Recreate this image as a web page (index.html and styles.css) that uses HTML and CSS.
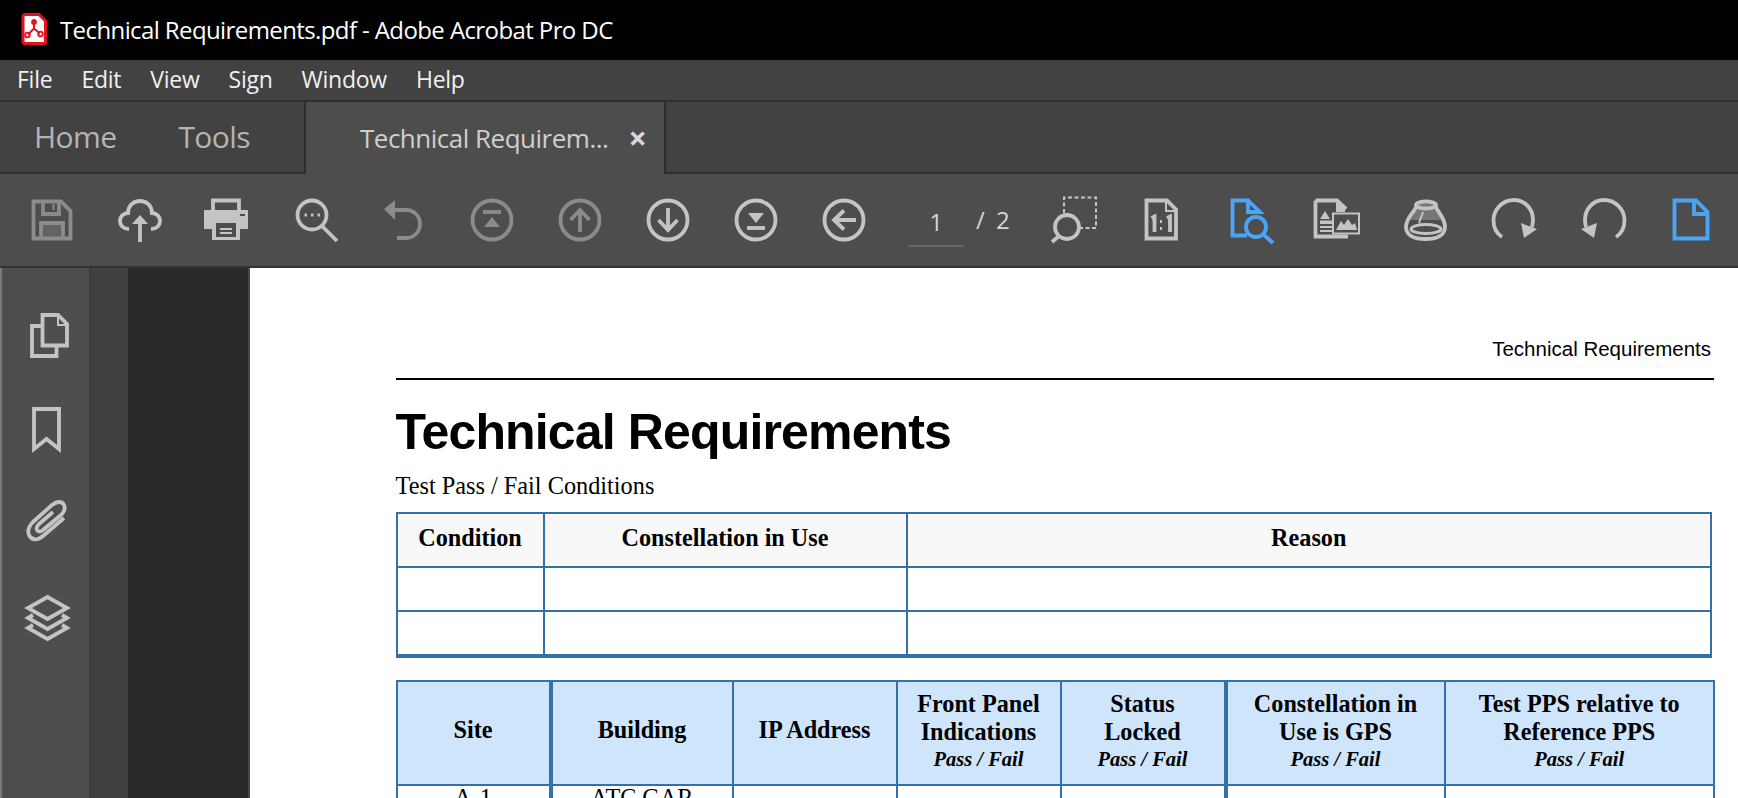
FILE: index.html
```html
<!DOCTYPE html>
<html lang="en">
<head>
<meta charset="utf-8">
<title>Technical Requirements.pdf - Adobe Acrobat Pro DC</title>
<link rel="stylesheet" href="styles.css">
</head>
<body>
<div class="app">
  <header class="titlebar">
    <svg class="app-icon" viewBox="0 0 26 32"><path d="M2 3.500a2 2 0 0 1 2-2h14l6.500 6.500v20.500a2 2 0 0 1-2 2H4a2 2 0 0 1-2-2z" fill="#fff" stroke="#e4101c" stroke-width="3"/><path d="M13 7.500v8M13 15.500l-6 6M13 15.500l6 5" fill="none" stroke="#e4101c" stroke-width="2"/><circle cx="13" cy="9" r="2" fill="none" stroke="#e4101c" stroke-width="1.800"/><circle cx="6.500" cy="22" r="2.300" fill="none" stroke="#e4101c" stroke-width="1.800"/><circle cx="19.500" cy="21" r="2.300" fill="none" stroke="#e4101c" stroke-width="1.800"/></svg>
    <span class="app-title">Technical Requirements.pdf - Adobe Acrobat Pro DC</span>
  </header>
  <nav class="menubar">
    <span>File</span><span>Edit</span><span>View</span><span>Sign</span><span>Window</span><span>Help</span>
  </nav>
  <div class="tabbar">
    <div class="tabs-left"><span class="tab-link">Home</span><span class="tab-link">Tools</span></div>
    <div class="tab-active"><span class="tab-name">Technical Requirem...</span><span class="tab-close">×</span></div>
    <div class="tabs-rest"></div>
  </div>
  <div class="toolbar">
    <div class="tool dim"><svg viewBox="0 0 48 48"><path class="s" d="M5.500 5.500H33L42.500 15V42.500H5.500Z"/><path class="s" d="M15 6V18H31V6M13 42V27H35V42"/><path class="s2" d="M25.500 8V14"/><rect class="fm" x="14" y="28" width="20" height="13"/></svg></div>
    <div class="tool"><svg viewBox="0 0 48 48"><path class="s" d="M13 33C7 33 4 29 4 25C4 20 8 17 12 17C12 10 17 5 24 5C31 5 36 10 36 17C40 17 44 20 44 25C44 29 41 33 35 33"/><path class="s" d="M24 46V22"/><path class="f" d="M24 19L32 28H16Z"/></svg></div>
    <div class="tool nudge"><svg viewBox="0 0 48 48"><path class="s" d="M11 16V4.500H37V16"/><path class="f" d="M3 14H45a1 1 0 0 1 1 1V33H37V24H11V33H2V15a1 1 0 0 1 1-1Z"/><path class="f" d="M10 23H38V44H10Z"/><rect x="14" y="27" width="20" height="14" fill="#4d4d4d"/><path d="M18 33H30M18 37H30" stroke="#c4c4c4" stroke-width="2"/><rect x="38" y="18" width="5" height="2" fill="#4d4d4d"/></svg></div>
    <div class="tool"><svg viewBox="0 0 48 48"><circle class="s" cx="20" cy="19" r="14.500"/><path class="s" d="M30 30L45 45"/><path class="dots" d="M12.500 19h2.500M19 19h2.500M25.500 19h2.500"/></svg></div>
    <div class="tool dim"><svg viewBox="0 0 48 48"><path class="s" d="M12 14H26C34 14 40 20 40 28C40 36 34 42 26 42H17"/><path class="f" d="M15 4V24L4 13Z"/></svg></div>
    <div class="tool dim"><svg viewBox="0 0 48 48"><circle class="s" cx="24" cy="24" r="19.500"/><path class="s" d="M15 16H33"/><path class="f" d="M24 21L32 31H16Z"/></svg></div>
    <div class="tool dim"><svg viewBox="0 0 48 48"><circle class="s" cx="24" cy="24" r="19.500"/><path class="s" d="M24 36V15M14.500 24L24 14L33.500 24"/></svg></div>
    <div class="tool"><svg viewBox="0 0 48 48"><circle class="s" cx="24" cy="24" r="19.500"/><path class="s" d="M24 12V33M14.500 24L24 34L33.500 24"/></svg></div>
    <div class="tool"><svg viewBox="0 0 48 48"><circle class="s" cx="24" cy="24" r="19.500"/><path class="f" d="M24 27L16 17H32Z"/><path class="s" d="M15 32H33"/></svg></div>
    <div class="tool"><svg viewBox="0 0 48 48"><circle class="s" cx="24" cy="24" r="19.500"/><path class="s" d="M36 24H15M24 14.500L14 24L24 33.500"/></svg></div>
    <div class="pager"><span class="page-input">1</span><span class="page-total">/ 2</span></div>
    <div class="tool"><svg viewBox="0 0 48 48"><path class="dash" d="M13 17V1.500H45V32H28"/><circle class="s" cx="16" cy="31" r="12"/><path class="s" d="M8 40L1 46"/></svg></div>
    <div class="tool nudge"><svg viewBox="0 0 48 48"><path class="s" d="M9.500 4.500H30L39 13.500V42.500H9.500Z"/><path class="s2" d="M29 5V15H39"/><path class="num" d="M14.500 22L17.500 20.500V36M30 22L33 20.500V36"/><path class="s2" d="M24 24V27M24 31V34"/></svg></div>
    <div class="tool blue"><svg viewBox="0 0 48 48"><path class="s" d="M20 39.500H5.500V4.500H21V16H33L21 4.500"/><circle class="s" cx="29" cy="31" r="10"/><path class="s" d="M36.500 38.500L46 47"/></svg></div>
    <div class="tool nudge"><svg viewBox="0 0 48 48"><path class="s" d="M2.500 4.500H24L33 13M2.500 4.500V40.500H35"/><path class="f" d="M23 5L32 14V16H23Z"/><path class="f" d="M7 23L12 15L17 23ZM7 24.500H19V28H7Z"/><path class="s2" d="M7 31H19M7 35H19"/><rect class="s2" x="20" y="17.500" width="26" height="20"/><path class="f" d="M23 34L28 25L31 29L35 23L39 29L42 27L44 34Z"/></svg></div>
    <div class="tool nudge"><svg viewBox="0 0 48 48"><path class="fm" d="M14 8H36L40 24H9Z"/><ellipse class="s" cx="25" cy="9" rx="10" ry="3.500"/><path class="s" d="M15 10C15 15 5 21 5 31C5 39 13 43 24.500 43C36 43 44 39 44 31C44 21 35 15 35 10"/><ellipse class="s3" cx="25" cy="33" rx="15" ry="4.500"/><path class="s2" d="M22 16L18 27"/></svg></div>
    <div class="tool"><svg viewBox="0 0 48 48"><path class="s" d="M11 41C5 37 2.500 31 2.500 24.500C2.500 13 12 4 23 4C34 4 42 13 42 24C42 27 41.500 29 41 31"/><path class="f" d="M30 27L46 33L33 42Z"/></svg></div>
    <div class="tool"><svg viewBox="0 0 48 48"><path class="s" d="M37 41C43 37 45.500 31 45.500 24.500C45.500 13 36 4 25 4C14 4 6 13 6 24C6 27 6.500 29 7 31"/><path class="f" d="M18 27L2 33L15 42Z"/></svg></div>
    <div class="tool blue"><svg viewBox="0 0 48 48"><path class="s" d="M7.500 4.500H29L40.500 16V42.500H7.500Z"/><path class="s" d="M27 5V18H40"/></svg></div>
  </div>
  <main class="workspace">
    <aside class="sidebar">
      <div class="side-icon"><svg viewBox="0 0 48 48"><path class="s" d="M19.500 4H35L44 13V34.500H19.500Z"/><path class="s2" d="M35 4V14H44"/><path class="s" d="M19 15H9V45H33.500V36"/></svg></div>
      <div class="side-icon"><svg viewBox="0 0 48 48"><path class="s" d="M11 4H36V44L23.500 34L11 44Z"/></svg></div>
      <div class="side-icon"><svg viewBox="0 0 48 48"><path class="s" d="M41 19L20 37C14 42 8 41 6 36C4 31 6 27 10 23L29 6C34 2 39 2 41 6C43 10 41 13 38 16L20 31C18 33 15 33 14 31C13 29 14 27 16 25L30 13"/></svg></div>
      <div class="side-icon"><svg viewBox="0 0 48 48"><path class="s" d="M24.500 4L44 15L24.500 26L5 15Z"/><path class="s" d="M10 22L5 25L24.500 36L44 25L39 22"/><path class="s" d="M10 32L5 35L24.500 46L44 35L39 32"/></svg></div>
    </aside>
    <div class="gutter"></div>
    <div class="canvas"></div>
    <article class="page">
      <div class="running-head">Technical Requirements</div>
      <hr class="rule">
      <h1 class="doc-title">Technical Requirements</h1>
      <p class="doc-sub">Test Pass / Fail Conditions</p>
      <table class="grid cond-table">
        <colgroup><col class="c1"><col class="c2"><col></colgroup>
        <tr class="head-grey"><th>Condition</th><th>Constellation in Use</th><th>Reason</th></tr>
        <tr class="blank"><td></td><td></td><td></td></tr>
        <tr class="blank last"><td></td><td></td><td></td></tr>
      </table>
      <table class="grid site-table">
        <colgroup><col class="s1"><col class="s2c"><col class="s3"><col class="s4"><col class="s5"><col class="s6"><col></colgroup>
        <tr class="head-blue">
          <th class="thick single">Site</th>
          <th class="single">Building</th>
          <th class="single">IP Address</th>
          <th>Front Panel Indications<em>Pass / Fail</em></th>
          <th class="thick">Status<br>Locked<em>Pass / Fail</em></th>
          <th>Constellation in Use is GPS<em>Pass / Fail</em></th>
          <th>Test PPS relative to Reference PPS<em>Pass / Fail</em></th>
        </tr>
        <tr class="data">
          <td class="thick">A-1</td><td>ATC GAR</td><td></td><td></td><td class="thick"></td><td></td><td></td>
        </tr>
      </table>
    </article>
  </main>
</div>
</body>
</html>
```
FILE: styles.css
```css
* { box-sizing: border-box; }
html, body { margin: 0; height: 100%; overflow: hidden; }
body { background: #4d4d4d; font-family: "Open Sans", "Noto Sans", sans-serif; }
.app { display: flex; flex-direction: column; height: 798px; width: 1738px; }

.titlebar { flex: 0 0 60px; background: #000; display: flex; align-items: center; padding: 0 0 2px 21px; gap: 13px; color: #fff; }
.app-icon { width: 26px; height: 32px; }
.app-title { font-size: 24px; font-family: "Open Sans", sans-serif; letter-spacing: -0.6px; white-space: nowrap; }

.menubar { flex: 0 0 42px; background: #424242; border-bottom: 2px solid #2f2f2f; display: flex; align-items: center; gap: 29px; padding: 0 0 2px 17px; color: #f0f0f0; font-size: 23px; letter-spacing: -0.25px; }

.tabbar { flex: 0 0 72px; display: flex; background: #424242; }
.tabs-left { width: 304px; border-bottom: 2px solid #2d2d2d; display: flex; align-items: center; gap: 62px; padding: 0 0 2px 34px; color: #b4b4b4; font-size: 30px; letter-spacing: -0.6px; }
.tab-active { width: 362px; background: #4d4d4d; border-left: 2px solid #2d2d2d; border-right: 2px solid #2d2d2d; display: flex; align-items: center; padding-left: 54px; color: #cfcfcf; font-size: 26px; letter-spacing: -0.5px; white-space: nowrap; }
.tab-close { margin-left: 20px; font-size: 32px; font-weight: 700; line-height: 1; color: #d8d8d8; }
.tabs-rest { flex: 1; border-bottom: 2px solid #2d2d2d; }

.toolbar { flex: 0 0 94px; background: #4d4d4d; border-bottom: 2px solid #333; display: flex; align-items: center; padding: 0 0 1px 8px; }
.tool { width: 88px; flex: none; display: flex; justify-content: center; color: #c4c4c4; }
.tool svg { width: 48px; height: 48px; display: block; overflow: visible; }
.tool.dim { color: #8b8b8b; }
.tool.blue { color: #4aa5f7; }
.tool.nudge svg { transform: translateX(-2px); }
.s { fill: none; stroke: currentColor; stroke-width: 3.800; }
.s2 { fill: none; stroke: currentColor; stroke-width: 2; }
.s3 { fill: none; stroke: currentColor; stroke-width: 3; }
.f { fill: currentColor; }
.fm { fill: currentColor; opacity: 0.35; }
.dots { fill: none; stroke: currentColor; stroke-width: 3; }
.dash { fill: none; stroke: currentColor; stroke-width: 2; stroke-dasharray: 4 2.500; }
.num { fill: none; stroke: currentColor; stroke-width: 3.800; }

.pager { width: 143px; flex: none; display: flex; align-items: center; color: #d6d6d6; font-size: 24px; }
.page-input { width: 56px; margin: 4px 0 0 20px; text-align: center; padding-bottom: 10px; border-bottom: 2px solid #666; height: 50px; line-height: 50px; }
.page-total { margin-left: 12px; word-spacing: 5px; }

.workspace { flex: 1; display: flex; min-height: 0; border-left: 2px solid #7a7a7a; }
.sidebar { width: 89px; flex: none; background: #4e4e4e; border-right: 2px solid #3c3c3c; padding-top: 20px; display: flex; flex-direction: column; }
.side-icon { height: 94px; display: flex; align-items: center; justify-content: center; padding-left: 2px; color: #c4c4c4; }
.side-icon svg { width: 48px; height: 48px; overflow: visible; }
.gutter { width: 37px; flex: none; background: #414141; }
.canvas { width: 122px; flex: none; background: #292929; border-right: 2px solid #484848; }

.page { flex: 1; background: #fff; padding: 69px 24px 0 145.500px; overflow: hidden; color: #000; min-width: 0; }
.running-head { text-align: right; font: 20.500px/24px "Liberation Sans", sans-serif; padding-right: 3px; }
.rule { border: 0; height: 2px; background: #000; margin: 17px 0 0; }
.doc-title { margin: 23px 0 0; font: 700 50px/58px "Liberation Sans", sans-serif; letter-spacing: -0.85px; }
.doc-sub { margin: 10px 0 0; font: 24.300px/30px "Liberation Serif", serif; }

.grid { border-collapse: collapse; table-layout: fixed; font-family: "Liberation Serif", serif; }
.grid th, .grid td { border: 2px solid #3570a8; padding: 0; text-align: center; font-size: 24.200px; }
.cond-table { margin-top: 11px; width: calc(100% - 2px); }
.c1 { width: 147px; }
.c2 { width: 363px; }
.head-grey th { height: 54px; background: #f8f8f8; vertical-align: top; padding-top: 10px; }
.blank td { height: 44px; }
.blank.last td { border-bottom-width: 4px; height: 45px; }

.site-table { margin-top: 22px; width: calc(100% + 1px); }
.s1 { width: 154px; }
.s2c { width: 182px; }
.s3 { width: 164px; }
.s4 { width: 164px; }
.s5 { width: 165px; }
.s6 { width: 219px; }
.grid .head-blue th { height: 104px; background: #cfe5fb; line-height: 28px; padding: 0 8px 4px; }
.grid .head-blue th.single { padding-bottom: 6px; }
.head-blue em { display: block; font-size: 20.500px; line-height: 27px; }
.grid th.thick, .grid td.thick { border-right-width: 4px; }
.data td { height: 40px; vertical-align: top; line-height: 24px; }
```
